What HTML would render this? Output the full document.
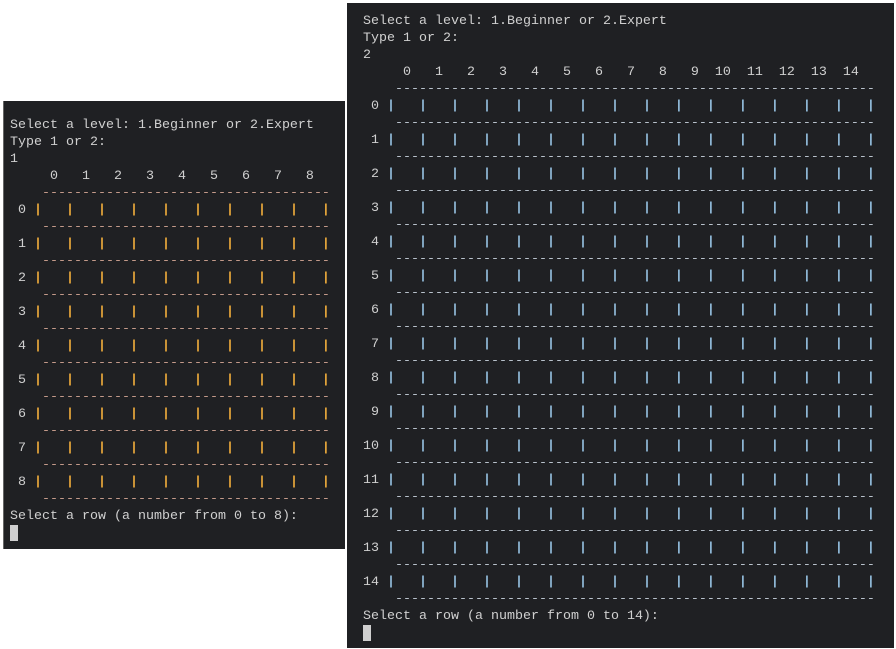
<!DOCTYPE html>
<html><head><meta charset="utf-8"><style>
body{margin:0;width:896px;height:649px;background:#fff;position:relative;overflow:hidden}
.p{position:absolute;background:#1f2023;box-sizing:border-box}
pre{margin:0;font-family:"Liberation Mono",monospace;font-size:13.33px;line-height:17px;color:#d0d0d0}
.l b{color:#e3a43a;font-weight:bold}
.l i{color:#c49a8a;font-style:normal}
.r b{color:#8fb8d6;font-weight:bold}
.r i{color:#b9c2cc;font-style:normal}
.cur{display:inline-block;width:8px;height:16px;background:#cfcfcf;vertical-align:top}
</style></head><body>
<div class="p l" style="left:3px;top:101px;width:342px;height:448px;padding:16px 0 0 6px;border-left:1px solid #666">
<pre>Select a level: 1.Beginner or 2.Expert
Type 1 or 2:
1
     0   1   2   3   4   5   6   7   8
    <i>------------------------------------</i>
 0 <b>|   |   |   |   |   |   |   |   |   |</b>
    <i>------------------------------------</i>
 1 <b>|   |   |   |   |   |   |   |   |   |</b>
    <i>------------------------------------</i>
 2 <b>|   |   |   |   |   |   |   |   |   |</b>
    <i>------------------------------------</i>
 3 <b>|   |   |   |   |   |   |   |   |   |</b>
    <i>------------------------------------</i>
 4 <b>|   |   |   |   |   |   |   |   |   |</b>
    <i>------------------------------------</i>
 5 <b>|   |   |   |   |   |   |   |   |   |</b>
    <i>------------------------------------</i>
 6 <b>|   |   |   |   |   |   |   |   |   |</b>
    <i>------------------------------------</i>
 7 <b>|   |   |   |   |   |   |   |   |   |</b>
    <i>------------------------------------</i>
 8 <b>|   |   |   |   |   |   |   |   |   |</b>
    <i>------------------------------------</i>
Select a row (a number from 0 to 8):
<span class="cur"></span></pre>
</div>
<div class="p r" style="left:347px;top:3px;width:547px;height:645px;padding:10px 0 0 16px">
<pre>Select a level: 1.Beginner or 2.Expert
Type 1 or 2:
2
     0   1   2   3   4   5   6   7   8   9  10  11  12  13  14
    <i>------------------------------------------------------------</i>
 0 <b>|   |   |   |   |   |   |   |   |   |   |   |   |   |   |   |</b>
    <i>------------------------------------------------------------</i>
 1 <b>|   |   |   |   |   |   |   |   |   |   |   |   |   |   |   |</b>
    <i>------------------------------------------------------------</i>
 2 <b>|   |   |   |   |   |   |   |   |   |   |   |   |   |   |   |</b>
    <i>------------------------------------------------------------</i>
 3 <b>|   |   |   |   |   |   |   |   |   |   |   |   |   |   |   |</b>
    <i>------------------------------------------------------------</i>
 4 <b>|   |   |   |   |   |   |   |   |   |   |   |   |   |   |   |</b>
    <i>------------------------------------------------------------</i>
 5 <b>|   |   |   |   |   |   |   |   |   |   |   |   |   |   |   |</b>
    <i>------------------------------------------------------------</i>
 6 <b>|   |   |   |   |   |   |   |   |   |   |   |   |   |   |   |</b>
    <i>------------------------------------------------------------</i>
 7 <b>|   |   |   |   |   |   |   |   |   |   |   |   |   |   |   |</b>
    <i>------------------------------------------------------------</i>
 8 <b>|   |   |   |   |   |   |   |   |   |   |   |   |   |   |   |</b>
    <i>------------------------------------------------------------</i>
 9 <b>|   |   |   |   |   |   |   |   |   |   |   |   |   |   |   |</b>
    <i>------------------------------------------------------------</i>
10 <b>|   |   |   |   |   |   |   |   |   |   |   |   |   |   |   |</b>
    <i>------------------------------------------------------------</i>
11 <b>|   |   |   |   |   |   |   |   |   |   |   |   |   |   |   |</b>
    <i>------------------------------------------------------------</i>
12 <b>|   |   |   |   |   |   |   |   |   |   |   |   |   |   |   |</b>
    <i>------------------------------------------------------------</i>
13 <b>|   |   |   |   |   |   |   |   |   |   |   |   |   |   |   |</b>
    <i>------------------------------------------------------------</i>
14 <b>|   |   |   |   |   |   |   |   |   |   |   |   |   |   |   |</b>
    <i>------------------------------------------------------------</i>
Select a row (a number from 0 to 14):
<span class="cur"></span></pre>
</div>
</body></html>
